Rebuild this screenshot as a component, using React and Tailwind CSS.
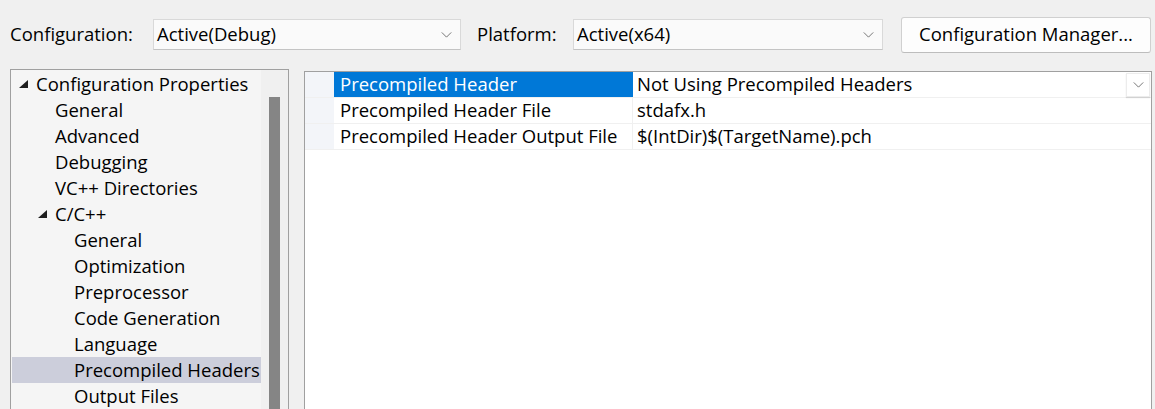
import React from "react";

const FONT = { fontFamily: '"Open Sans", "Noto Sans CJK SC", sans-serif' };

function Chevron({ className = "" }) {
  return (
    <svg viewBox="0 0 12 7" className={className} fill="none" stroke="#606060" strokeWidth="1">
      <path d="M0.5 0.5 L6 6 L11.5 0.5" />
    </svg>
  );
}

function Tri({ className = "" }) {
  return (
    <svg viewBox="0 0 9 8" className={className}>
      <polygon points="9,0 9,8 0,8" fill="#1e1e1e" />
    </svg>
  );
}

function Combo({ value, width }) {
  return (
    <div className={`flex h-[31px] ${width} items-center justify-between border border-[#d9d9d9] border-b-[#c4c4c4] bg-[#fafafa] pl-[3px] pr-[8px]`}>
      <span>{value}</span>
      <Chevron className="h-[6px] w-[11px]" />
    </div>
  );
}

const tree = [
  { label: "Configuration Properties", level: 0, open: true },
  { label: "General", level: 1 },
  { label: "Advanced", level: 1 },
  { label: "Debugging", level: 1 },
  { label: "VC++ Directories", level: 1 },
  { label: "C/C++", level: 1, open: true },
  { label: "General", level: 2 },
  { label: "Optimization", level: 2 },
  { label: "Preprocessor", level: 2 },
  { label: "Code Generation", level: 2 },
  { label: "Language", level: 2 },
  { label: "Precompiled Headers", level: 2, selected: true },
  { label: "Output Files", level: 2 },
];

const indent = ["pl-[7px]", "pl-[26px]", "pl-[45px]"];

function TreeRow({ item }) {
  return (
    <div className={`flex h-[26px] items-center whitespace-nowrap ${item.selected ? "bg-[#cccedb]" : ""} ${indent[item.level]}`}>
      <div className="flex w-[17px] shrink-0 items-center">
        {item.open && <Tri className="h-[8px] w-[9px]" />}
      </div>
      <span>{item.label}</span>
    </div>
  );
}

const props = [
  { name: "Precompiled Header", value: "Not Using Precompiled Headers", selected: true },
  { name: "Precompiled Header File", value: "stdafx.h" },
  { name: "Precompiled Header Output File", value: "$(IntDir)$(TargetName).pch" },
];

export default function App() {
  return (
    <div className="h-[409px] w-[1155px] overflow-hidden bg-[#f0f0f0] text-[18.5px] leading-none text-black" style={FONT}>
      {/* toolbar */}
      <div className="flex h-[69px] items-center pl-[10px]">
        <span className="w-[143px]">Configuration:</span>
        <Combo value="Active(Debug)" width="w-[308px]" />
        <span className="ml-[16px] w-[96px]">Platform:</span>
        <Combo value="Active(x64)" width="w-[310px]" />
        <button className="ml-[18px] h-[36px] w-[250px] rounded-[3px] border border-[#d0d0d0] border-b-[#bdbdbd] bg-[#fdfdfd]">
          Configuration Manager...
        </button>
      </div>

      {/* body */}
      <div className="flex pl-[10px]">
        <div className="flex h-[360px] w-[279px] shrink-0 border border-[#a0a0a0] bg-[#f5f5f5]">
          <div className="flex-1 overflow-hidden pl-[1px] pt-[1px]">
            {tree.map((t, i) => <TreeRow key={i} item={t} />)}
          </div>
          <div className="w-[27px] shrink-0 bg-[#f0f0f0] pl-[8px] pt-[27px]">
            <div className="h-[320px] w-[11px] bg-[#858585]" />
          </div>
        </div>

        <div className="ml-[15px] mt-[2px] h-[360px] w-[848px] shrink-0 border border-[#a0a0a0] bg-white">
          {props.map((p, i) => (
            <div key={i} className="flex h-[26px] border-b border-[#f0f0f0]">
              <div className="w-[29px] shrink-0 bg-[#f3f5f9]" />
              <div className={`flex w-[299px] shrink-0 items-center whitespace-nowrap pl-[6px] ${p.selected ? "bg-[#0078d7] text-white" : "border-r border-[#f0f0f0]"}`}>
                {p.name}
              </div>
              <div className="flex flex-1 items-center justify-between pl-[4px]">
                <span className="whitespace-nowrap">{p.value}</span>
                {p.selected && (
                  <div className="mr-[1px] flex h-[24px] w-[24px] items-center justify-center border border-[#ececec] bg-white shadow-[0_1px_1px_rgba(0,0,0,0.12)]">
                    <Chevron className="h-[6px] w-[11px]" />
                  </div>
                )}
              </div>
            </div>
          ))}
        </div>
      </div>
    </div>
  );
}
